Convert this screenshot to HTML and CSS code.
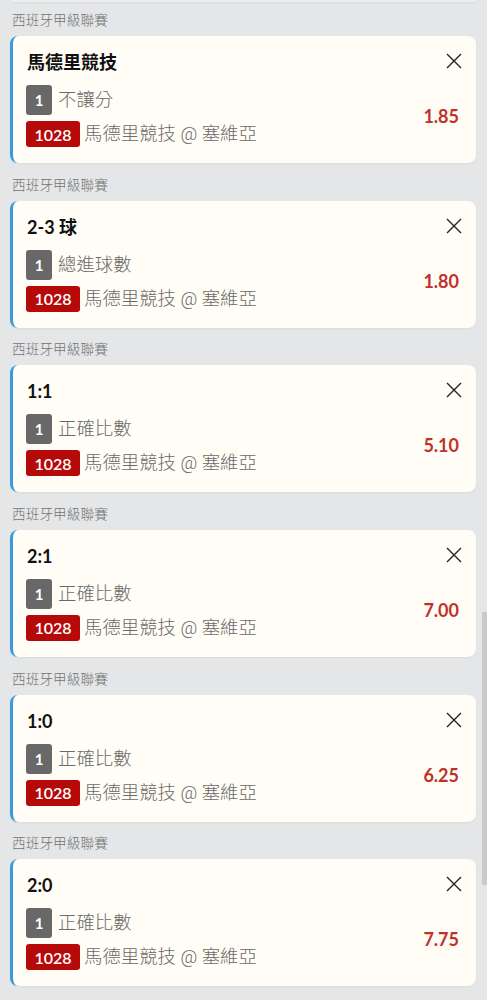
FILE: index.html
```html
<!DOCTYPE html>
<html lang="zh-Hant">
<head>
<meta charset="utf-8">
<link rel="stylesheet" href="styles.css">
</head>
<body>
<div class="page">
  <div class="tail"></div>
  <div class="list">
    <section class="group">
      <div class="league">西班牙甲級聯賽</div>
      <div class="card">
        <div class="head"><span class="title">馬德里競技</span><svg class="close" viewBox="0 0 16 16"><path d="M1 1L15 15M15 1L1 15"/></svg></div>
        <div class="body">
          <div class="rows">
            <div class="row"><span class="num">1</span><span class="txt gap6">不讓分</span></div>
            <div class="row"><span class="code">1028</span><span class="txt gap4">馬德里競技 @ 塞維亞</span></div>
          </div>
          <span class="odds">1.85</span>
        </div>
      </div>
    </section>
    <section class="group">
      <div class="league">西班牙甲級聯賽</div>
      <div class="card">
        <div class="head"><span class="title">2-3 球</span><svg class="close" viewBox="0 0 16 16"><path d="M1 1L15 15M15 1L1 15"/></svg></div>
        <div class="body">
          <div class="rows">
            <div class="row"><span class="num">1</span><span class="txt gap6">總進球數</span></div>
            <div class="row"><span class="code">1028</span><span class="txt gap4">馬德里競技 @ 塞維亞</span></div>
          </div>
          <span class="odds">1.80</span>
        </div>
      </div>
    </section>
    <section class="group">
      <div class="league">西班牙甲級聯賽</div>
      <div class="card">
        <div class="head"><span class="title">1:1</span><svg class="close" viewBox="0 0 16 16"><path d="M1 1L15 15M15 1L1 15"/></svg></div>
        <div class="body">
          <div class="rows">
            <div class="row"><span class="num">1</span><span class="txt gap6">正確比數</span></div>
            <div class="row"><span class="code">1028</span><span class="txt gap4">馬德里競技 @ 塞維亞</span></div>
          </div>
          <span class="odds">5.10</span>
        </div>
      </div>
    </section>
    <section class="group">
      <div class="league">西班牙甲級聯賽</div>
      <div class="card">
        <div class="head"><span class="title">2:1</span><svg class="close" viewBox="0 0 16 16"><path d="M1 1L15 15M15 1L1 15"/></svg></div>
        <div class="body">
          <div class="rows">
            <div class="row"><span class="num">1</span><span class="txt gap6">正確比數</span></div>
            <div class="row"><span class="code">1028</span><span class="txt gap4">馬德里競技 @ 塞維亞</span></div>
          </div>
          <span class="odds">7.00</span>
        </div>
      </div>
    </section>
    <section class="group">
      <div class="league">西班牙甲級聯賽</div>
      <div class="card">
        <div class="head"><span class="title">1:0</span><svg class="close" viewBox="0 0 16 16"><path d="M1 1L15 15M15 1L1 15"/></svg></div>
        <div class="body">
          <div class="rows">
            <div class="row"><span class="num">1</span><span class="txt gap6">正確比數</span></div>
            <div class="row"><span class="code">1028</span><span class="txt gap4">馬德里競技 @ 塞維亞</span></div>
          </div>
          <span class="odds">6.25</span>
        </div>
      </div>
    </section>
    <section class="group">
      <div class="league">西班牙甲級聯賽</div>
      <div class="card">
        <div class="head"><span class="title">2:0</span><svg class="close" viewBox="0 0 16 16"><path d="M1 1L15 15M15 1L1 15"/></svg></div>
        <div class="body">
          <div class="rows">
            <div class="row"><span class="num">1</span><span class="txt gap6">正確比數</span></div>
            <div class="row"><span class="code">1028</span><span class="txt gap4">馬德里競技 @ 塞維亞</span></div>
          </div>
          <span class="odds">7.75</span>
        </div>
      </div>
    </section>
  </div>
  <div class="scrollbar"></div>
</div>
</body>
</html>
```

FILE: styles.css
```css
html, body {
  margin: 0;
  padding: 0;
  background: #e5e6e8;
}
body {
  font-family: Lato, "Noto Sans CJK TC", sans-serif;
  width: 487px;
  height: 1000px;
  overflow: hidden;
}
.page {
  position: relative;
  height: 1000px;
}
.tail {
  margin-left: 10px;
  width: 466px;
  height: 2px;
  background: #eceef0;
  border-radius: 0 0 8px 8px;
  box-shadow: 0 1px 2px rgba(0, 0, 0, 0.06);
}
.list {
  display: flex;
  flex-direction: column;
  gap: 11.66px;
  padding: 8px 11px 0 10px;
}
.league {
  height: 20px;
  line-height: 20px;
  font-size: 13.7px;
  font-weight: 300;
  color: #747474;
  padding-left: 2px;
  margin-bottom: 6px;
}
.card {
  box-sizing: border-box;
  height: 127px;
  background: #fffdf5;
  border-left: 3px solid #3b9ad9;
  border-radius: 8px;
  padding: 16px 14px 0 13px;
  box-shadow: 0 1px 2px rgba(0, 0, 0, 0.05);
}
.head {
  display: flex;
  justify-content: space-between;
  align-items: center;
  height: 20px;
}
.title {
  font-size: 18px;
  font-weight: 700;
  color: #111;
  line-height: 20px;
  padding-left: 1px;
}
.close {
  width: 16px;
  height: 16px;
  margin-top: -2px;
}
.close path {
  stroke: #222;
  stroke-width: 1.4;
  fill: none;
}
.body {
  display: flex;
  align-items: center;
  justify-content: space-between;
  margin-top: 13px;
}
.rows {
  display: flex;
  flex-direction: column;
  gap: 6px;
}
.row {
  display: flex;
  align-items: center;
}
.num {
  width: 26px;
  height: 30px;
  border-radius: 3px;
  background: #686868;
  color: #fff;
  font-weight: 700;
  font-size: 15px;
  display: flex;
  align-items: center;
  justify-content: center;
}
.code {
  width: 54px;
  height: 26px;
  border-radius: 3px;
  background: #b60a0a;
  color: #fff;
  font-weight: 600;
  font-size: 16px;
  display: flex;
  align-items: center;
  justify-content: center;
}
.txt {
  font-family: Roboto, "Noto Sans CJK TC", sans-serif;
  font-size: 18.4px;
  font-weight: 300;
  color: #6a6a6a;
  line-height: 24px;
}
.gap6 { margin-left: 6px; }
.gap4 { margin-left: 4px; }
.odds {
  font-size: 18px;
  font-weight: 700;
  color: #c0312b;
  margin-right: 3px;
}
.scrollbar {
  position: absolute;
  right: 0;
  top: 612px;
  width: 5px;
  height: 273px;
  background: #c9cacc;
}
```
